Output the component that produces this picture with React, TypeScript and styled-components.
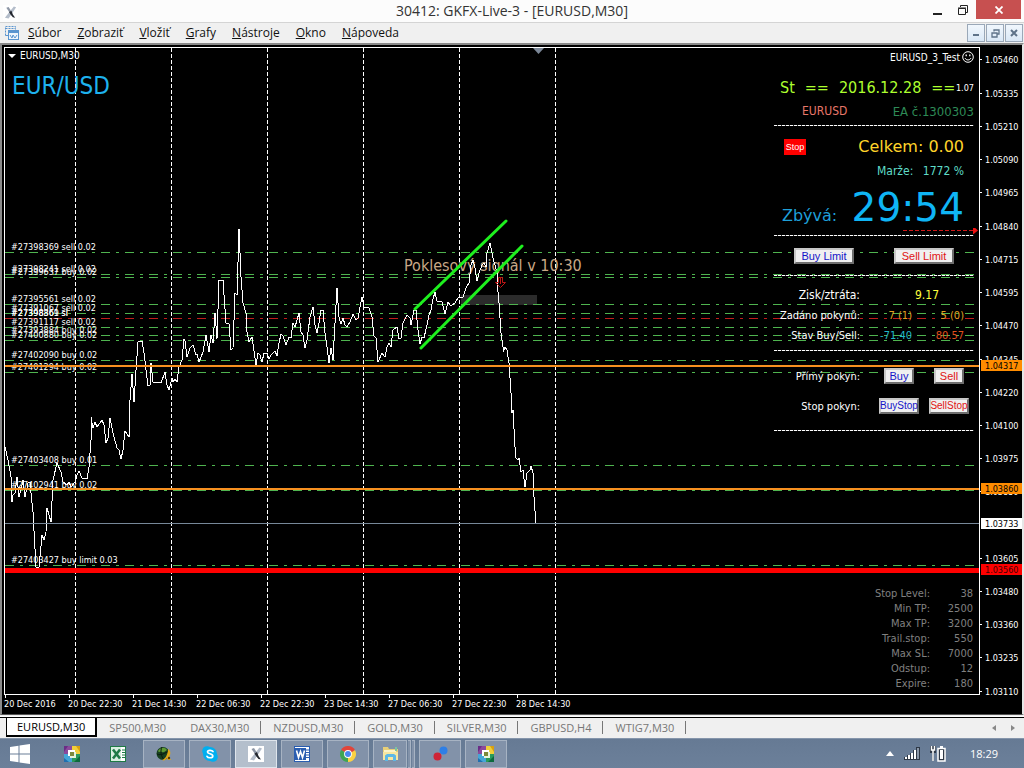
import React from "react";
import styled, { createGlobalStyle } from "styled-components";

const TAHOMA = '"DejaVu Sans Condensed", "Noto Sans", sans-serif';
const VERDANA = '"DejaVu Sans", sans-serif';
const SEGOE = '"Open Sans", "Noto Sans", sans-serif';
const ARIAL = '"Liberation Sans", sans-serif';

const GlobalStyle = createGlobalStyle`
  * { box-sizing: border-box; }
  body { margin: 0; background: #efefef; font-family: ${SEGOE}; }
  button { font: inherit; padding: 0; border: 0; background: none; }
`;

const Page = styled.div`
  display: flex;
  flex-direction: column;
  min-height: 100vh;
`;

/* ---------- window chrome ---------- */

const TitleBar = styled.header`
  display: grid;
  grid-template-columns: 120px 1fr 120px;
  height: 23px;
  background: #fcfcfc;
  border-bottom: 1px solid #d4d4d4;
`;

const AppIcon = styled.div`
  padding: 3px 3px 0;
`;

const WindowTitle = styled.h1`
  margin: 0;
  text-align: center;
  font-size: 14px;
  font-weight: 400;
  line-height: 22px;
  color: #333;
  white-space: nowrap;
`;

const WindowControls = styled.div`
  display: flex;
  justify-content: flex-end;
  padding-right: 3px;
`;

const WindowButton = styled.button<{ $close?: boolean }>`
  display: flex;
  align-items: center;
  justify-content: center;
  width: ${(p) => (p.$close ? 45 : 26)}px;
  height: ${(p) => (p.$close ? 19 : 20)}px;
  && { background: ${(p) => (p.$close ? "#c75050" : "transparent")}; }
`;

const MenuBar = styled.nav`
  display: flex;
  align-items: center;
  height: 20px;
  padding-left: 5px;
  background: #f0f0f0;
`;

const MenuList = styled.div`
  display: flex;
  flex: 1;
  gap: 16px;
  padding-left: 8px;
`;

const MenuItem = styled.button`
  font-size: 12px;
  line-height: 18px;
  color: #111;
  &::first-letter { text-decoration: underline; }
`;

const MdiControls = styled.div`
  display: flex;
  gap: 1px;
  padding-right: 1px;
`;

const MdiButton = styled.button`
  && {
    display: flex;
    align-items: center;
    justify-content: center;
    width: 18px;
    height: 18px;
    border: 1px solid #9aa8b8;
    background: linear-gradient(#f1f7fd, #dae8f6);
  }
`;

/* ---------- chart window ---------- */

const ChartWindow = styled.main`
  display: grid;
  grid-template-columns: 1fr 42px;
  grid-template-rows: 648px 19px;
  padding: 2px 0 0 2px;
  border: solid #8a8a8a;
  border-width: 2px 2px 1px 2px;
  border-right-color: #e6e6e6;
  border-bottom-color: #555;
  background: #000;
`;

const Plot = styled.section`
  position: relative;
  overflow: hidden;
  border: 1px solid #fff;
`;

const PlotCanvas = styled.svg`
  display: block;
  width: 100%;
  height: 646px;
`;

const PriceAxis = styled.svg`
  width: 42px;
  height: 667px;
  grid-row: 1 / span 2;
  grid-column: 2;
`;

const TimeAxis = styled.div`
  display: flex;
  overflow: hidden;
`;

const TimeLabel = styled.span`
  position: relative;
  flex: 0 0 64px;
  padding-top: 3px;
  font: 9px/12px ${TAHOMA};
  color: #fff;
  white-space: nowrap;
  &::before {
    content: "";
    position: absolute;
    left: 1px;
    top: 0;
    width: 1px;
    height: 3px;
    background: #fff;
  }
`;

const SymbolHeader = styled.div`
  position: absolute;
  left: 3px;
  top: 2px;
  display: flex;
  align-items: center;
  gap: 4px;
  font: 10px/12px ${TAHOMA};
  color: #fff;
`;

const SymbolName = styled.div`
  position: absolute;
  left: 7px;
  top: 23px;
  font: 24px/30px ${TAHOMA};
  color: #1eb2ee;
`;

/* ---------- trade panel ---------- */

const TradePanel = styled.aside`
  position: absolute;
  top: 0;
  right: 5px;
  width: 200px;
  font-family: ${TAHOMA};
`;

const Row = styled.div<{ $h: number; $mt?: number; $left?: number; $right?: number; $baseline?: boolean }>`
  display: flex;
  align-items: ${(p) => (p.$baseline ? "baseline" : "center")};
  justify-content: space-between;
  height: ${(p) => p.$h}px;
  margin-top: ${(p) => p.$mt ?? 0}px;
  padding-left: ${(p) => p.$left ?? 0}px;
  padding-right: ${(p) => p.$right ?? 0}px;
  white-space: nowrap;
`;

const DateLine = styled.div`
  display: flex;
  gap: 10px;
`;

const Readout = styled.span<{ $size: number; $color: string; $wide?: boolean }>`
  font-family: ${(p) => (p.$wide ? VERDANA : TAHOMA)};
  font-size: ${(p) => p.$size}px;
  line-height: 1;
  color: ${(p) => p.$color};
`;

const Divider = styled.hr<{ $mt?: number }>`
  height: 1px;
  margin: ${(p) => (p.$mt ?? 0) + 1}px 0 0;
  border: 0;
  background: repeating-linear-gradient(to right, #fff 0 3px, #333 3px 4px);
`;

const ScriptName = styled.div`
  display: flex;
  align-items: center;
  justify-content: flex-end;
  gap: 2px;
  height: 18px;
  font-size: 10px;
  color: #fff;
`;

const ArrowRow = styled.div`
  display: flex;
  justify-content: flex-end;
  height: 6px;
  margin-right: -4px;
`;

const StatRow = styled.div<{ $mt?: number; $large?: boolean }>`
  display: grid;
  grid-template-columns: 86px 1fr 1fr;
  align-items: center;
  height: 20px;
  margin-top: ${(p) => p.$mt ?? 0}px;
  padding-right: 10px;
  text-align: right;
  font-size: ${(p) => (p.$large ? 12 : 11)}px;
  color: #fff;
  white-space: nowrap;
`;

const StatValue = styled.span<{ $color: string; $span?: boolean }>`
  color: ${(p) => p.$color};
  grid-column: ${(p) => (p.$span ? "span 2" : "auto")};
  padding-right: ${(p) => (p.$span ? 25 : 0)}px;
`;

const OrderRow = styled.div<{ $mt: number; $right: number }>`
  display: flex;
  align-items: center;
  height: 20px;
  margin-top: ${(p) => p.$mt}px;
  padding-right: ${(p) => p.$right}px;
`;

const OrderLabel = styled.span`
  flex: 0 0 86px;
  margin-right: auto;
  text-align: right;
  font-size: 11px;
  color: #fff;
`;

const OrderButtons = styled.div<{ $gap: number }>`
  display: flex;
  gap: ${(p) => p.$gap}px;
`;

const OrderButton = styled.button<{ $w: number; $color: string; $small?: boolean }>`
  && {
    width: ${(p) => p.$w}px;
    height: 16px;
    border: 2px solid;
    border-color: #c8c8c8 #6e6e6e #6e6e6e #c8c8c8;
    background: #f0f0f0;
    color: ${(p) => p.$color};
    font: ${(p) => (p.$small ? 10 : 11)}px/12px ${ARIAL};
    display: flex;
    justify-content: center;
    white-space: nowrap;
  }
`;

const StopButton = styled.button`
  && {
    width: 22px;
    height: 16px;
    background: #f00;
    color: #fff;
    font: 9px/16px ${ARIAL};
    text-align: center;
  }
`;

const LimitsTable = styled.table`
  position: absolute;
  right: 6px;
  bottom: 3px;
  border-collapse: collapse;
  font: 11px/15px ${TAHOMA};
  color: #808080;
  text-align: right;
  th { font-weight: 400; padding: 0; }
  td { width: 43px; padding: 0; }
`;

/* ---------- chart tabs ---------- */

const TabBar = styled.div`
  display: flex;
  height: 21px;
  padding-left: 6px;
  background: #f0f0f0;
  border-top: 1px solid #000;
  box-shadow: 0 -1px 0 #fff;
  margin-top: 2px;
`;

const Tab = styled.button<{ $active?: boolean }>`
  && {
    position: relative;
    height: 19px;
    padding: ${(p) => (p.$active ? "0 10px" : "0 12px")};
    font-size: 11px;
    line-height: 18px;
    color: ${(p) => (p.$active ? "#000" : "#777")};
    background: ${(p) => (p.$active ? "#fff" : "transparent")};
    border: solid #000;
    border-width: ${(p) => (p.$active ? "0 2px 2px 1px" : "0")};
  }
  & + &::after {
    content: "";
    position: absolute;
    right: 0;
    top: 3px;
    width: 1px;
    height: 13px;
    background: #777;
  }
`;

const TabScroll = styled.div`
  display: flex;
  align-items: center;
  gap: 15px;
  margin-left: auto;
  padding-right: 9px;
`;

const TabArrow = styled.button`
  display: flex;
`;

/* ---------- taskbar ---------- */

const Taskbar = styled.footer`
  display: flex;
  align-items: center;
  flex: 1;
  min-height: 30px;
  gap: 4px;
  padding-right: 26px;
  background: linear-gradient(#667a94, #6c809a);
  border-top: 1px solid #8595ab;
`;

const TaskButton = styled.button<{ $open?: boolean; $active?: boolean; $w?: number }>`
  && {
    display: flex;
    align-items: center;
    justify-content: center;
    width: ${(p) => p.$w ?? 42}px;
    height: 28px;
    border: ${(p) => (p.$open ? "1px solid" : "0")};
    border-color: ${(p) => (p.$active ? "#dfe5ec" : "#a7b3c3")};
    background: ${(p) => (p.$active ? "#b4bfcc" : p.$open ? "#8292a9" : "transparent")};
  }
`;

const StartArea = styled.div`
  padding-right: 7px;
`;

const TaskGroup = styled.div`
  display: flex;
  width: 42px;
  gap: 1px;
`;

const StackEdge = styled.span`
  width: 3px;
  height: 28px;
  border: solid #a7b3c3;
  border-width: 1px 1px 1px 0;
  background: #8292a9;
`;

const Tray = styled.div`
  display: flex;
  align-items: center;
  gap: 10px;
  margin-left: auto;
  color: #fff;
`;

const Clock = styled.time`
  padding-left: 14px;
  font-size: 11px;
`;

/* ---------- data ---------- */

const MENU = ["Súbor", "Zobraziť", "Vložiť", "Grafy", "Nástroje", "Okno", "Nápoveda"];
const TABS = ["EURUSD,M30", "SP500,M30", "DAX30,M30", "NZDUSD,M30", "GOLD,M30", "SILVER,M30", "GBPUSD,H4", "WTIG7,M30"];
const TIMES = [
  "20 Dec 2016", "20 Dec 22:30", "21 Dec 14:30", "22 Dec 06:30", "22 Dec 22:30",
  "23 Dec 14:30", "27 Dec 06:30", "27 Dec 22:30", "28 Dec 14:30",
];
const LIMITS: [string, number][] = [
  ["Stop Level:", 38], ["Min TP:", 2500], ["Max TP:", 3200], ["Trail.stop:", 550],
  ["Max SL:", 7000], ["Odstup:", 12], ["Expire:", 180],
];

/* offset of the drawing's origin from the corner of the plot */
const PLOT_SHIFT = "translate(-5,-48)";

const ORDER_LEVELS: { y: number; label: string }[] = [
  { y: 252, label: "#27398369 sell 0.02" },
  { y: 274, label: "#27398241 sell 0.02" },
  { y: 277, label: "#27399637 buy 0.02" },
  { y: 304, label: "#27395561 sell 0.02" },
  { y: 313, label: "#27391067 sell 0.02" },
  { y: 327, label: "#27391117 sell 0.02" },
  { y: 335, label: "#27393884 buy 0.02" },
  { y: 340, label: "#27400880 buy 0.02" },
  { y: 360, label: "#27402090 buy 0.02" },
  { y: 372, label: "#27401294 buy 0.02" },
  { y: 465, label: "#27403408 buy 0.01" },
  { y: 490, label: "#27402941 buy 0.02" },
  { y: 565, label: "#27403427 buy limit 0.03" },
];
const STOP_LABELS = ["#27398369 sl", "#27398861 sl"];
const GRID_X = [75, 171, 267, 363, 459, 555];

const PRICES: [number, string][] = [
  [60, "1.05460"], [94, "1.05335"], [127, "1.05210"], [160, "1.05090"], [193, "1.04965"],
  [227, "1.04840"], [260, "1.04715"], [293, "1.04595"], [326, "1.04470"], [360, "1.04345"],
  [393, "1.04220"], [426, "1.04100"], [459, "1.03975"], [492, "1.03850"], [559, "1.03605"],
  [592, "1.03480"], [625, "1.03360"], [658, "1.03235"], [692, "1.03110"],
];
const PRICE_TAGS = [
  { y: 366, text: "1.04317", bg: "#ff8c00", fg: "#000" },
  { y: 489, text: "1.03860", bg: "#ff8c00", fg: "#000" },
  { y: 524, text: "1.03733", bg: "#ffffff", fg: "#000" },
  { y: 570, text: "1.03560", bg: "#ff0000", fg: "#400" },
];

const PRICE_LINE =
  "5,447 8,460 11,477 12,502 13,495 15,493 17,477 19,497 21,490 23,480 25,497 28,483 30,482 32,503 33,512 36,567 37,568 39,567 42,535 44,540 46,532 47,508 51,522 53,480 57,463 61,472 63,482 67,485 69,482 71,487 75,482 77,475 79,471 82,478 87,479 89,467 91,440 " +
  "91,417 93,428 95,422 97,427 102,420 104,425 106,443 108,438 110,418 113,433 117,448 119,450 121,459 123,450 125,431 129,437 130,400 132,374 134,402 136,370 138,342 142,341 144,353 148,386 150,385 151,363 153,382 161,383 165,372 167,385 169,390 172,378 173,382 175,379 177,382 179,367 182,360 184,339 185,341 187,357 190,348 193,345 196,355 197,354 199,362 203,352 206,335 209,352 211,335 213,343 215,313 217,339 219,280 223,280 224,295 226,323 229,324 231,350 233,348 235,293 237,295 239,229 241,277 243,303 246,313 247,332 249,342 252,337 256,365 258,353 260,355 262,362 264,353 267,353 269,359 271,355 275,351 277,356 279,343 281,334 283,336 286,345 289,337 291,338 293,323 295,327 299,313 301,332 303,335 305,348 307,340 310,317 313,307 315,325 317,333 319,323 321,310 323,310 325,333 327,347 329,363 331,348 333,360 335,323 337,288 339,317 341,324 343,318 345,325 347,327 350,322 353,314 356,320 358,318 362,297 364,307 369,308 372,317 374,336 376,338 378,362 382,353 385,357 387,347 389,343 391,347 393,330 397,327 399,339 401,338 403,323 407,315 410,318 411,325 414,310 416,310 418,330 420,344 422,337 424,338 427,325 429,315 431,310 433,299 435,292 437,301 442,302 445,314 448,302 451,306 455,303 458,298 463,297 466,288 469,283 471,265 473,260 475,268 477,281 479,273 482,265 484,263 486,267 487,253 490,243 492,253 494,262 497,272 497,280 499,303 501,333 503,347 503,352 505,347 507,350 509,363 511,393 512,413 513,410 515,447 516,458 518,460 519,458 521,472 523,470 525,487 527,473 530,470 531,466 533,473 534,497 536,524";

/* ---------- drawings ---------- */

const XIcon = ({ size }: { size: number }) => (
  <svg width={size} height={size} viewBox="0 0 16 16" aria-hidden="true">
    <rect width="16" height="16" fill="#fff" />
    <path d="M11.500 1.500L14 2.500 6 14.500 2 13.500Z" fill="#b4bdca" />
    <path d="M3.500 3l2.500-1 2.500 4-1.500 2z" fill="#8d96a5" />
    <path d="M6.500 7.500l2.500-1.500 1.500 4 2.500 3.500-2.500-.5-2.500-3z" fill="#23272f" />
  </svg>
);

const ChartsIcon = () => (
  <svg width="15" height="15" viewBox="0 0 15 15" fill="none" stroke="#5b95cf" aria-hidden="true">
    <path d="M.5 9.500V.5h10v3M.5 2.500h10" strokeDasharray="2 1" />
    <path d="M.5 9.500h3" />
    <rect x="3.500" y="4.500" width="10" height="9" fill="#eef5fc" />
    <path d="M3.500 6h10" strokeWidth="2" />
    <path d="M5 9l2 3 1-3 2 3 2-3" />
  </svg>
);

const Windows = () => (
  <svg width="20" height="20" viewBox="0 0 20 20" fill="#fff" aria-hidden="true">
    <path d="M0 3l8.500-1.200v7.700H0zM9.500 1.600L20 0v9.500H9.500zM0 10.500h8.500v7.700L0 17zM9.500 10.500H20V20L9.500 18.400z" />
  </svg>
);

const Squares = () => (
  <svg width="16" height="16" viewBox="0 0 16 16" aria-hidden="true">
    <rect width="8" height="8" fill="#8a4a9c" />
    <path d="M0 0h4L0 6z" fill="#6a2c86" />
    <rect x="8" width="8" height="8" fill="#f0cf3a" />
    <path d="M12 0h4v6z" fill="#d8a010" />
    <rect y="8" width="8" height="8" fill="#45a6d8" />
    <path d="M0 12l5 4H0z" fill="#1f6fb0" />
    <rect x="8" y="8" width="8" height="8" fill="#2a9a5a" />
    <path d="M16 10v6h-6z" fill="#0c6a3c" />
    <path d="M4 4h7v2H6v4H4z" fill="#fff" />
    <path d="M12 6v6H6v-2h4V6z" fill="#e6f4dc" />
    <rect x="6" y="6" width="4" height="4" fill="#7c8a3a" />
  </svg>
);

const Office = ({ letter, color }: { letter: string; color: string }) => (
  <svg width="16" height="16" viewBox="0 0 16 16" aria-hidden="true">
    <rect x=".5" y=".5" width="15" height="15" fill="#fff" stroke={color} />
    <path d="M12 4h3M12 6.500h3M12 9h3M12 11.500h3" stroke={color} />
    {letter === "X" ? (
      <>
        <path d="M1 1h10v14H1z" fill="#d9efe0" />
        <path d="M3 3.500l7 9M10 3.500l-7 9" stroke={color} strokeWidth="2.600" />
      </>
    ) : (
      <>
        <path d="M1 2h11v12H1z" fill={color} />
        <path d="M2.500 4.500l2 7 2-6 2 6 2-7" fill="none" stroke="#fff" strokeWidth="1.600" />
      </>
    )}
  </svg>
);

const Globe = () => (
  <svg width="16" height="16" viewBox="0 0 16 16" aria-hidden="true">
    <circle cx="7" cy="7.500" r="6.500" fill="#163f1f" />
    <path d="M2 5c3-4 7-4 9-1-2 1-3 3-5 2S3 7 2 5z" fill="#5d9a34" />
    <path d="M1 8c4 2 8-1 12-3M6 1c-2 4-1 9 2 13" stroke="#0a1a10" fill="none" />
    <path d="M12 3c3 2 3 5 1 8l2 3h-3l-1-2c-1 2-3 3-5 2 3-1 6-5 6-11z" fill="#e0a818" />
    <circle cx="13" cy="12" r="1.200" fill="#5a3c05" />
  </svg>
);

const Skype = () => (
  <svg width="16" height="16" viewBox="0 0 16 16" aria-hidden="true">
    <circle cx="5" cy="5" r="4.800" fill="#00aff0" />
    <circle cx="11" cy="11" r="4.800" fill="#00aff0" />
    <circle cx="8" cy="8" r="7" fill="#00aff0" />
    <path d="M11 5.500C10 4 5.500 3.800 5.500 6c0 2.200 5.300 1.300 5.300 3.900 0 2.400-4.800 2.400-5.800.4" fill="none" stroke="#fff" strokeWidth="1.700" strokeLinecap="round" />
  </svg>
);

const Chrome = () => (
  <svg width="16" height="16" viewBox="0 0 16 16" aria-hidden="true">
    <path d="M8 8L1.070 4A8 8 0 0 1 14.930 4z" fill="#e2453a" />
    <path d="M8 8L14.930 4A8 8 0 0 1 8 16z" fill="#fbd143" />
    <path d="M8 8L8 16A8 8 0 0 1 1.070 4z" fill="#3fa553" />
    <path d="M8 4.300h7.050L8 8z" fill="#e2453a" />
    <circle cx="8" cy="8" r="3.900" fill="#fff" />
    <circle cx="8" cy="8" r="3" fill="#4a87ee" />
  </svg>
);

const Explorer = () => (
  <svg width="17" height="16" viewBox="0 0 17 16" aria-hidden="true">
    <path d="M1 1h5l1 2h9v11H1z" fill="#e8cf77" />
    <path d="M2 4h12v3H2z" fill="#fbf3c8" />
    <path d="M1 6h15v8H1z" fill="#f6e6a0" />
    <path d="M3 15V9.500L5 8h7l2 1.500V15h-3v-4H6v4z" fill="#5cb8e6" />
    <path d="M13 1h2v4h-2z" fill="#7cc4a0" />
  </svg>
);

const Dots = () => (
  <svg width="15" height="15" viewBox="0 0 15 15" aria-hidden="true">
    <circle cx="10.500" cy="4.500" r="4" fill="#2f7fe6" />
    <circle cx="4.500" cy="10.500" r="4" fill="#cf2436" />
  </svg>
);

const Smiley = () => (
  <svg width="12" height="12" viewBox="0 0 12 12" fill="none" stroke="#fff" aria-hidden="true">
    <circle cx="6" cy="6" r="5.300" />
    <path d="M3 7c1 2.600 5 2.600 6 0" />
    <path d="M4.200 3.500v1.700M7.800 3.500v1.700" strokeWidth="1.300" />
  </svg>
);

function PlotDrawing() {
  return (
    <PlotCanvas role="img" aria-label="EURUSD M30">
      <g transform={PLOT_SHIFT}>
        <rect x="461" y="295" width="76" height="10" fill="#2b2b2b" />
        <g stroke="#fff" strokeDasharray="4 2" shapeRendering="crispEdges">
          {GRID_X.map((x) => (
            <line key={x} x1={x + 0.5} x2={x + 0.5} y1="48" y2="694" />
          ))}
        </g>
        <g stroke="#4fb44f" strokeDasharray="9 6 3 6" shapeRendering="crispEdges">
          {ORDER_LEVELS.map((o) => (
            <line key={o.y} x1="5" x2="100%" y1={o.y + 0.5} y2={o.y + 0.5} />
          ))}
          <line x1="5" x2="100%" y1="318.500" y2="318.500" stroke="#c01c1c" />
        </g>
        <g fill="#fff" fontFamily={TAHOMA} fontSize="9">
          {ORDER_LEVELS.map((o) => (
            <text key={o.y} x="11" y={o.y - 2}>{o.label}</text>
          ))}
          {STOP_LABELS.map((label) => (
            <text key={label} x="11" y="316">{label}</text>
          ))}
        </g>
        <text x="404" y="271" fill="#c9a887" fontFamily={TAHOMA} fontSize="16">Poklesový signál v 10:30</text>
        <polyline points={PRICE_LINE} fill="none" stroke="#fff" shapeRendering="crispEdges" />
        <path d="M415 309L506 221M421 348L522 246" stroke="#1ef01e" strokeWidth="3" strokeLinecap="round" />
        <path d="M498.500 282.500v-5h4v5h3l-5 5-5-5zM500.500 278v6" fill="none" stroke="#c01515" />
        <g stroke="#f79020" strokeWidth="2" shapeRendering="crispEdges">
          <line x1="5" x2="110%" y1="366" y2="366" />
          <line x1="5" x2="110%" y1="489" y2="489" />
        </g>
        <line x1="5" x2="110%" y1="523.500" y2="523.500" stroke="#778899" shapeRendering="crispEdges" />
        <line x1="5" x2="110%" y1="570.500" y2="570.500" stroke="#f00" strokeWidth="5" />
        <path d="M533 48h11l-5.500 6z" fill="#7b8797" />
      </g>
    </PlotCanvas>
  );
}

function PriceScale() {
  return (
    <PriceAxis role="img" aria-label="Price scale">
      <g transform="translate(-980,-47)" fontFamily={TAHOMA} fontSize="9">
        {PRICES.map(([y, price]) => (
          <g key={price} fill="#fff">
            <rect x="980" y={y - 1} width="2" height="1" />
            <text x="985" y={y + 3}>{price}</text>
          </g>
        ))}
        {PRICE_TAGS.map((tag) => (
          <g key={tag.text}>
            <rect x="981" y={tag.y - 6} width="41" height="11" fill={tag.bg} />
            <text x="985" y={tag.y + 3} fill={tag.fg}>{tag.text}</text>
          </g>
        ))}
      </g>
    </PriceAxis>
  );
}

function Panel() {
  return (
    <TradePanel>
      <ScriptName>EURUSD_3_Test<Smiley /></ScriptName>
      <Row $mt={10} $h={24} $left={6}>
        <DateLine>
          <Readout $size={16} $color="#adff2f">St</Readout>
          <Readout $size={16} $color="#adff2f">==</Readout>
          <Readout $size={16} $color="#adff2f">2016.12.28</Readout>
          <Readout $size={16} $color="#adff2f">==</Readout>
        </DateLine>
        <Readout $size={9} $color="#fff">1.07</Readout>
      </Row>
      <Row $h={22} $left={28}>
        <Readout $size={12} $color="#e8776a">EURUSD</Readout>
        <Readout $size={13} $color="#2e8b57">EA č.1300303</Readout>
      </Row>
      <Divider $mt={2} />
      <Row $mt={10} $h={22} $left={10} $right={10}>
        <StopButton>Stop</StopButton>
        <Readout $size={16} $color="#ffd42a" $wide>Celkem: 0.00</Readout>
      </Row>
      <Row $mt={3} $h={20} $left={103} $right={10}>
        <Readout $size={12} $color="#5fdcc8">Marže:</Readout>
        <Readout $size={12} $color="#5fdcc8">1772 %</Readout>
      </Row>
      <Row $mt={7} $h={40} $left={8} $right={10} $baseline>
        <Readout $size={16} $color="#1e9fd8" $wide>Zbývá:</Readout>
        <Readout $size={39} $color="#0fb5f5" $wide>29:54</Readout>
      </Row>
      <ArrowRow>
        <svg width="75" height="6" aria-hidden="true">
          <path d="M0 2.500h70" stroke="#d01818" strokeDasharray="4 2" shapeRendering="crispEdges" />
          <path d="M70 -2l5 4.500-5 4z" fill="#f01010" />
        </svg>
      </ArrowRow>
      <Divider />
      <Row $mt={10} $h={20} $left={20} $right={20}>
        <OrderButton $w={60} $color="#1414c8">Buy Limit</OrderButton>
        <OrderButton $w={60} $color="#e01414">Sell Limit</OrderButton>
      </Row>
      <Divider $mt={8} />
      <StatRow $mt={9} $large>
        Zisk/ztráta:
        <StatValue $span $color="#ffff3c">9.17</StatValue>
      </StatRow>
      <StatRow>
        Zadáno pokynů:
        <StatValue $color="#e0a020">7 (1)</StatValue>
        <StatValue $color="#e0a020">5 (0)</StatValue>
      </StatRow>
      <StatRow>
        Stav Buy/Sell:
        <StatValue $color="#20b8c8">-71.40</StatValue>
        <StatValue $color="#e0501c">80.57</StatValue>
      </StatRow>
      <Divider $mt={4} />
      <OrderRow $mt={15} $right={10}>
        <OrderLabel>Přímý pokyn:</OrderLabel>
        <OrderButtons $gap={20}>
          <OrderButton $w={30} $color="#1414c8">Buy</OrderButton>
          <OrderButton $w={30} $color="#e01414">Sell</OrderButton>
        </OrderButtons>
      </OrderRow>
      <OrderRow $mt={10} $right={5}>
        <OrderLabel>Stop pokyn:</OrderLabel>
        <OrderButtons $gap={10}>
          <OrderButton $w={40} $small $color="#1414c8">BuyStop</OrderButton>
          <OrderButton $w={40} $small $color="#e01414">SellStop</OrderButton>
        </OrderButtons>
      </OrderRow>
      <Divider $mt={13} />
    </TradePanel>
  );
}

export default function App() {
  return (
    <Page>
      <GlobalStyle />
      <TitleBar>
        <AppIcon><XIcon size={15} /></AppIcon>
        <WindowTitle>30412: GKFX-Live-3 - [EURUSD,M30]</WindowTitle>
        <WindowControls>
          <WindowButton aria-label="Minimize">
            <svg width="9" height="10"><path d="M0 9h9" stroke="#222" strokeWidth="2" /></svg>
          </WindowButton>
          <WindowButton aria-label="Restore">
            <svg width="10" height="10" fill="none" stroke="#222">
              <path d="M2.500 2V.5h7v7H8" />
              <path d="M.5 3.500h7v6h-7zM0 3h8" />
            </svg>
          </WindowButton>
          <WindowButton $close aria-label="Close">
            <svg width="8" height="8" stroke="#fff" strokeWidth="1.800"><path d="M.5.5l7 7M7.500.5l-7 7" /></svg>
          </WindowButton>
        </WindowControls>
      </TitleBar>
      <MenuBar>
        <ChartsIcon />
        <MenuList>
          {MENU.map((m) => <MenuItem key={m}>{m}</MenuItem>)}
        </MenuList>
        <MdiControls>
          <MdiButton aria-label="Minimize chart">
            <svg width="8" height="8"><path d="M1 6h6" stroke="#5f7389" strokeWidth="2" /></svg>
          </MdiButton>
          <MdiButton aria-label="Restore chart">
            <svg width="9" height="9" fill="none" stroke="#5f7389"><path d="M3 2.500V1h5v4H6.500M1 4h5v4H1z" strokeWidth="1.300" /></svg>
          </MdiButton>
          <MdiButton aria-label="Close chart">
            <svg width="8" height="8" stroke="#5f7389" strokeWidth="2"><path d="M1 1l6 6M7 1L1 7" /></svg>
          </MdiButton>
        </MdiControls>
      </MenuBar>

      <ChartWindow>
        <Plot>
          <PlotDrawing />
          <SymbolHeader>
            <svg width="8" height="4" aria-hidden="true"><path d="M0 0h8L4 4z" fill="#fff" /></svg>
            EURUSD,M30
          </SymbolHeader>
          <SymbolName>EUR/USD</SymbolName>
          <Panel />
          <LimitsTable>
            <tbody>
              {LIMITS.map(([name, value]) => (
                <tr key={name}>
                  <th scope="row">{name}</th>
                  <td>{value}</td>
                </tr>
              ))}
            </tbody>
          </LimitsTable>
        </Plot>
        <PriceScale />
        <TimeAxis>
          {TIMES.map((t) => <TimeLabel key={t}>{t}</TimeLabel>)}
        </TimeAxis>
      </ChartWindow>

      <TabBar>
        {TABS.map((t, i) => <Tab key={t} $active={i === 0}>{t}</Tab>)}
        <TabScroll>
          <TabArrow aria-label="Scroll left"><svg width="4" height="6"><path d="M4 0v6L0 3z" fill="#888" /></svg></TabArrow>
          <TabArrow aria-label="Scroll right"><svg width="4" height="6"><path d="M0 0v6l4-3z" fill="#888" /></svg></TabArrow>
        </TabScroll>
      </TabBar>

      <Taskbar>
        <StartArea>
          <TaskButton $w={40} aria-label="Start"><Windows /></TaskButton>
        </StartArea>
        <TaskButton aria-label="Tiles"><Squares /></TaskButton>
        <TaskButton aria-label="Excel"><Office letter="X" color="#1e7a45" /></TaskButton>
        <TaskButton $open aria-label="Globe"><Globe /></TaskButton>
        <TaskButton $open aria-label="Skype"><Skype /></TaskButton>
        <TaskButton $open $active aria-label="Trading terminal"><XIcon size={16} /></TaskButton>
        <TaskButton $open aria-label="Word"><Office letter="W" color="#2a5db0" /></TaskButton>
        <TaskButton $open aria-label="Chrome"><Chrome /></TaskButton>
        <TaskGroup>
          <TaskButton $open $w={34} aria-label="Explorer"><Explorer /></TaskButton>
          <StackEdge />
          <StackEdge />
        </TaskGroup>
        <TaskButton $open aria-label="Dots"><Dots /></TaskButton>
        <TaskButton $open aria-label="Tiles window"><Squares /></TaskButton>
        <Tray>
          <svg width="8" height="5" aria-hidden="true"><path d="M0 5h8L4 0z" fill="#fff" /></svg>
          <svg width="16" height="13" aria-hidden="true">
            <path d="M0 10h3v3H0zM3 8h3v5H3zM6 6h3v7H6zM9 3h3v10H9zM12 0h4v13h-4z" fill="#2e3846" />
            <path d="M1 10h2v2H1zM4 8h2v4H4zM7 6h2v6H7zM10 3h2v9h-2z" fill="#fff" />
            <path d="M13 1h2v11h-2z" fill="#8a97a8" />
          </svg>
          <svg width="16" height="16" aria-hidden="true">
            <path d="M0 0h6v7H4v8H2V7H0z" fill="#2e3846" />
            <path d="M1.500 0v4h3V0M3 4v11" fill="none" stroke="#fff" strokeWidth="1.500" />
            <path d="M8 2.500h7v12.500H8z" fill="#2e3846" stroke="#fff" strokeWidth="1.500" />
            <path d="M10 1h3" stroke="#fff" strokeWidth="2" />
            <path d="M10 4h3v9h-3z" fill="#fff" />
          </svg>
          <Clock>18:29</Clock>
        </Tray>
      </Taskbar>
    </Page>
  );
}
